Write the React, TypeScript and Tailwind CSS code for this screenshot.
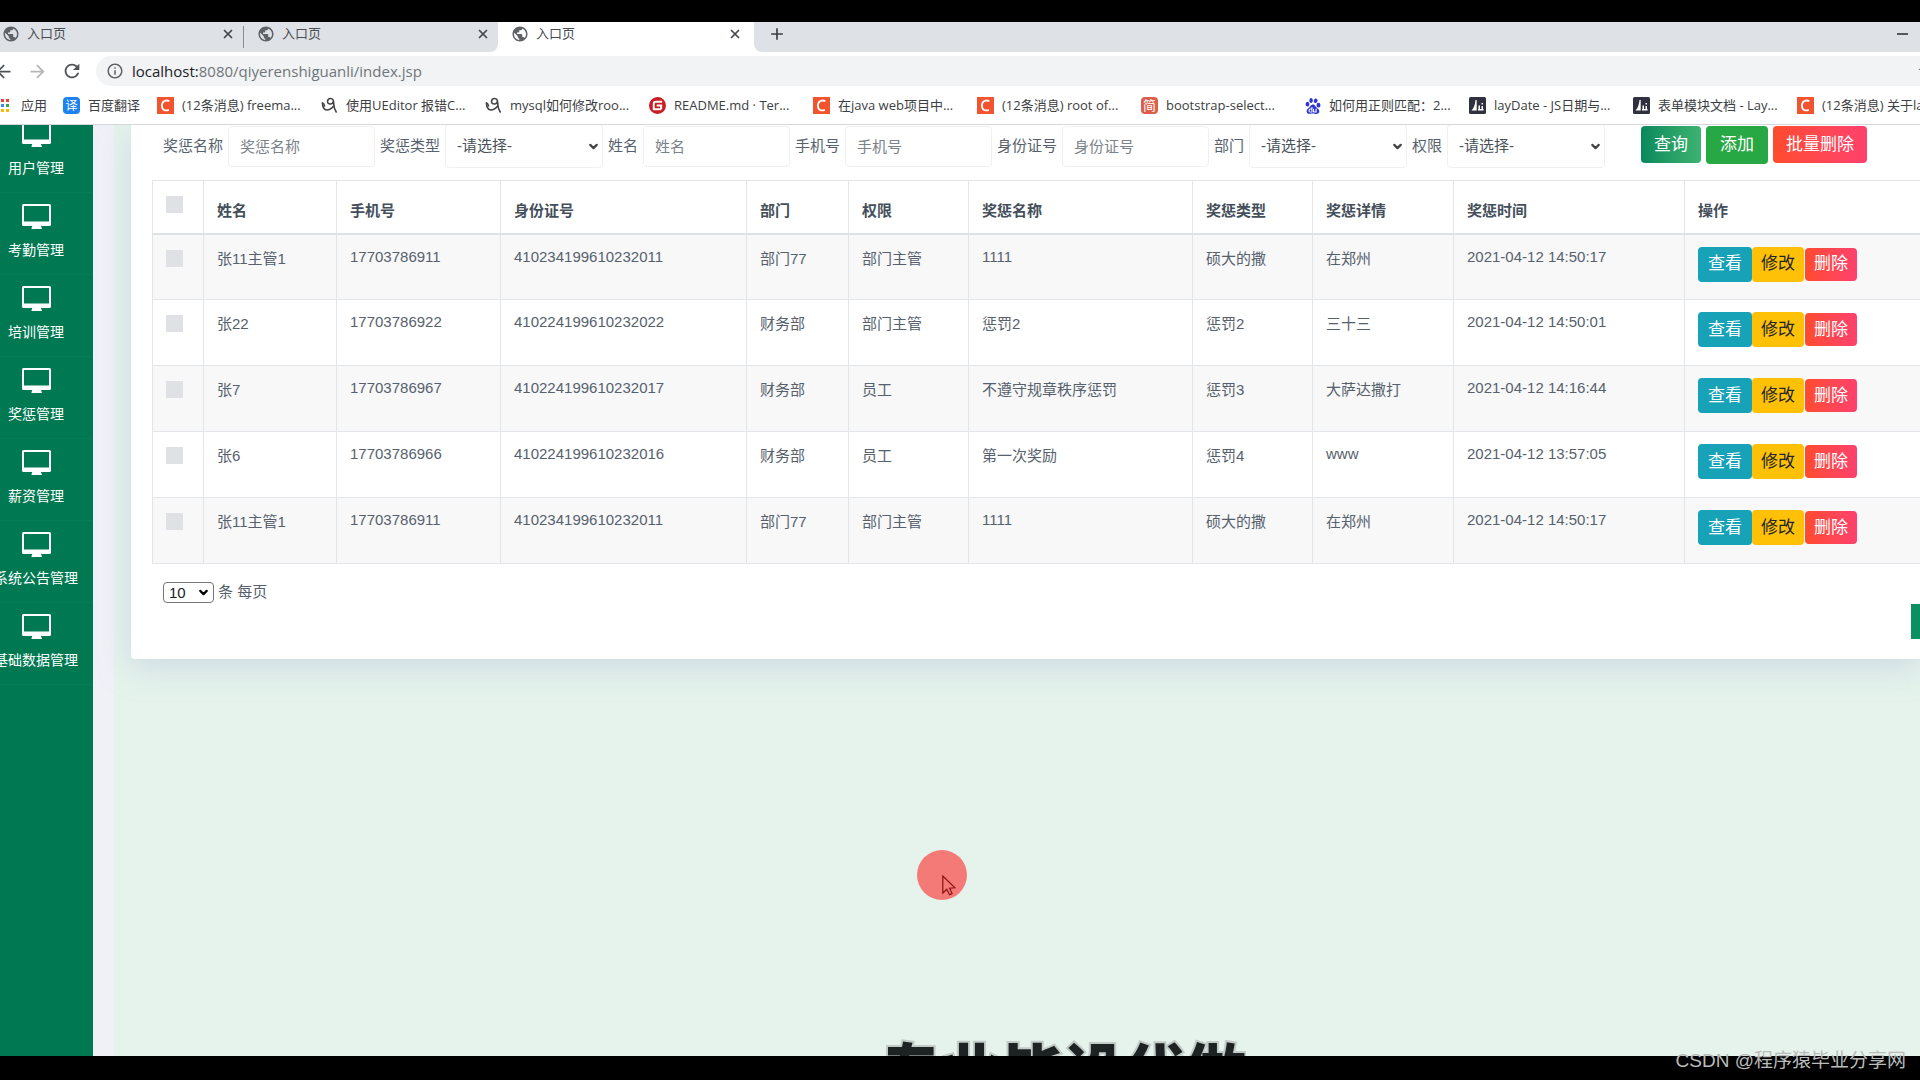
import { MdPublic, MdRefresh, MdArrowBack, MdArrowForward, MdInfoOutline, MdAdd, MdStar } from "react-icons/md";
import { SiBaidu, SiGitee } from "react-icons/si";
import { ChevronDown, X } from "lucide-react";
import type { ReactNode } from "react";

const uiFont = "font-['Open_Sans','Noto_Sans_CJK_SC',sans-serif]";
const pageFont = "font-['Liberation_Sans','Noto_Sans_CJK_SC',sans-serif]";

/* ---------- browser chrome ---------- */

function Tab({ active = false }: { active?: boolean }) {
  return (
    <div
      role="tab"
      aria-selected={active}
      className={
        active
          ? "flex h-full w-[256px] shrink-0 items-center bg-white pr-3 pb-[6px] pl-[13px]"
          : "flex h-full w-[254px] shrink-0 items-center bg-[#dee1e6] pr-2 pb-[6px] pl-[13px]"
      }
    >
      <MdPublic className="size-[18px] text-[#5f6368]" />
      <span className="ml-[7px] flex-1 text-[13px] text-[#4a4d51]">入口页</span>
      <button aria-label="关闭标签页" className="text-[#45494d]">
        <X className="size-[14px]" strokeWidth={3} />
      </button>
    </div>
  );
}

function TabStrip() {
  return (
    <div role="tablist" className="flex h-[30px] shrink-0 items-center bg-[#dee1e6]">
      <div className="-ml-[11px] flex h-full items-center">
        <Tab />
        <span className="h-[22px] w-px bg-[#888c91]" />
      </div>
      <div className="h-full bg-white">
        <div className="h-full overflow-hidden rounded-br-lg">
          <Tab />
        </div>
      </div>
      <Tab active />
      <div className="flex h-full flex-1 items-center justify-between bg-white">
        <div className="flex h-full flex-1 items-center justify-between rounded-bl-lg bg-[#dee1e6] pr-3 pb-[6px] pl-[13px]">
          <button aria-label="新标签页" className="text-[#3c4043]">
            <MdAdd className="size-[20px]" />
          </button>
          <button aria-label="最小化" className="h-[2px] w-[11px] bg-[#55585c]" />
        </div>
      </div>
    </div>
  );
}

function Toolbar() {
  return (
    <div className="flex h-[38px] shrink-0 items-center bg-white">
      <div className="-ml-[7px] flex items-center gap-[13px]">
        <button aria-label="后退" className="text-[#4f5357]"><MdArrowBack className="size-[21px]" /></button>
        <button aria-label="前进" className="text-[#b4b6b8]"><MdArrowForward className="size-[21px]" /></button>
        <button aria-label="刷新" className="text-[#4f5357]"><MdRefresh className="size-[22px]" /></button>
      </div>
      <div className="ml-[13px] flex h-[30px] flex-1 items-center overflow-hidden rounded-l-full bg-[#f1f3f4] pl-[10px]">
        <MdInfoOutline className="size-[18px] text-[#5f6368]" />
        <span className="ml-2 flex-1 text-[15px] text-[#70757a]">
          <span className="text-[#202124]">localhost:</span>8080/qiyerenshiguanli/index.jsp
        </span>
        <MdStar className="-mr-[15px] size-[18px] text-[#5f6368]" />
      </div>
    </div>
  );
}

function CsdnIcon() {
  return (
    <svg viewBox="0 0 17 17" className="size-[17px] shrink-0">
      <rect width="17" height="17" fill="#f4532f" />
      <path d="M12.400 4.200C9 2.600 5 3.800 4.900 8.600c0 4.800 3.600 5.600 7 4.200" fill="none" stroke="#fff" strokeWidth="1.800" />
    </svg>
  );
}

function BlogIcon() {
  return (
    <svg viewBox="0 0 17 17" className="size-[17px] shrink-0" fill="none" stroke="#444" strokeWidth="1.600" strokeLinecap="round">
      <path d="M1.500 6c0 4 1.300 6.500 4 7 2.500.3 5-1.500 7.200-4" />
      <path d="M12.500 6.500c.3-3.500-.8-5-2.800-5S6.500 3 6.500 4.600s1.300 2.500 2.800 2.400 3-1 3.200-3" />
      <path d="M12.500 5.500c.2 3.500.7 6.500 2.700 9.500" />
      <path d="M1.500 6c1 .3 1.800 1.500 2 3" />
    </svg>
  );
}

function LayuiIcon() {
  return (
    <svg viewBox="0 0 17 17" className="size-[17px] shrink-0" fill="#fff">
      <rect width="17" height="17" rx="1.500" fill="#2f3140" />
      <path d="M2.500 13.500c2.500-2.500 3.500-6 4-10.500h1.200v10.500z" />
      <path d="M9 12h5.500v1.500H9zM9.500 8.500H11V12H9.500zM12.500 6H14v1.500h-1.500zM12.500 9H14v3h-1.500z" />
    </svg>
  );
}

function AppsIcon() {
  const colors = ["#ea4335", "#ea4335", "#4285f4", "#34a853", "#fbbc04", "#fbbc04"];
  return (
    <svg viewBox="0 0 10 14" className="h-[14px] w-[10px]">
      {colors.map((c, i) => (
        <rect key={i} x={1 + (i % 2) * 5} y={Math.floor(i / 2) * 5} width="3" height="3" fill={c} />
      ))}
    </svg>
  );
}

const bookmarks: { icon: ReactNode; text: string }[] = [
  { icon: <CsdnIcon />, text: "(12条消息) freema..." },
  { icon: <BlogIcon />, text: "使用UEditor 报错C..." },
  { icon: <BlogIcon />, text: "mysql如何修改roo..." },
  { icon: <SiGitee className="size-[17px] text-[#c71d23]" />, text: "README.md · Ter..." },
  { icon: <CsdnIcon />, text: "在java web项目中..." },
  { icon: <CsdnIcon />, text: "(12条消息) root of..." },
  {
    icon: <span className="flex size-[17px] items-center justify-center rounded-sm bg-[#dc5f4d] text-[13px] leading-none text-white">简</span>,
    text: "bootstrap-select...",
  },
  { icon: <SiBaidu className="size-[16px] text-[#2c34d6]" />, text: "如何用正则匹配：2..." },
  { icon: <LayuiIcon />, text: "layDate - JS日期与..." },
  { icon: <LayuiIcon />, text: "表单模块文档 - Lay..." },
  { icon: <CsdnIcon />, text: "(12条消息) 关于la" },
];

function BookmarkBar() {
  return (
    <nav className="flex h-[35px] shrink-0 items-center overflow-hidden border-b border-[#d5d7da] bg-white pb-[3px] text-[13px] whitespace-nowrap text-[#3c4043]">
      <a href="#apps" className="flex w-[63px] shrink-0 items-center gap-[11px]"><AppsIcon />应用</a>
      <a href="#fanyi" className="flex w-[94px] shrink-0 items-center gap-2">
        <span className="flex size-[17px] items-center justify-center rounded-sm bg-[#1f83ee] text-[12px] leading-none text-white">译</span>
        百度翻译
      </a>
      {bookmarks.map((b, i) => (
        <a key={i} href="#bookmark" className="flex w-[164px] shrink-0 items-center gap-2">
          {b.icon}
          {b.text}
        </a>
      ))}
    </nav>
  );
}

/* ---------- page ---------- */

function MonitorIcon() {
  return (
    <svg viewBox="0 0 29 25" className="h-[25px] w-[29px]" fill="#fff">
      <path fillRule="evenodd" d="M1.500 0h26A1.500 1.500 0 0 1 29 1.500v19a1.500 1.500 0 0 1-1.500 1.500H19l.8 2.200V25H9.500v-.8L10.300 22h-8.800A1.500 1.500 0 0 1 0 20.500v-19A1.500 1.500 0 0 1 1.500 0zM2 2v15.500h25V2z" />
    </svg>
  );
}

const menu = ["用户管理", "考勤管理", "培训管理", "奖惩管理", "薪资管理", "系统公告管理", "基础数据管理"];

function Sidebar() {
  return (
    <aside className="w-[93px] shrink-0 overflow-hidden bg-[#007851]">
      <nav className="-mt-[14px] -ml-5 w-[112px]">
        {menu.map((m) => (
          <a key={m} href="#menu" className="flex h-[82px] flex-col items-center border-b border-[#067d57] pt-[11px] text-[14px] leading-5 text-white">
            <MonitorIcon />
            <span className="mt-[11px] whitespace-nowrap">{m}</span>
          </a>
        ))}
      </nav>
    </aside>
  );
}

function TextField({ id, label }: { id: string; label: string }) {
  return (
    <>
      <label htmlFor={id}>{label}</label>
      <input id={id} placeholder={label} className="h-[41px] w-[147px] rounded border border-[#eef0f3] bg-white px-[11px] placeholder:text-[#7b828a]" />
    </>
  );
}

function SelectField({ id, label }: { id: string; label: string }) {
  return (
    <>
      <label htmlFor={id}>{label}</label>
      <div className="relative">
        <select id={id} className="h-[44px] w-[158px] appearance-none rounded border border-[#eef0f3] bg-white px-[11px] text-[#495057]">
          <option>-请选择-</option>
        </select>
        <ChevronDown className="pointer-events-none absolute top-[16px] right-[3px] size-[13px] text-[#444]" strokeWidth={4} />
      </div>
    </>
  );
}

function Filters() {
  return (
    <form className="flex h-[42px] items-center gap-[5px] pl-[11px] whitespace-nowrap">
      <TextField id="name" label="奖惩名称" />
      <SelectField id="type" label="奖惩类型" />
      <TextField id="person" label="姓名" />
      <TextField id="phone" label="手机号" />
      <TextField id="idcard" label="身份证号" />
      <SelectField id="dept" label="部门" />
      <SelectField id="role" label="权限" />
      <div className="ml-[31px] flex items-center gap-[5px] pb-[3px] text-[17px] leading-6 text-white">
        <button type="button" className="h-[37px] rounded bg-linear-to-r from-[#06895c] to-[#3cb371] px-[13px]">查询</button>
        <button type="button" className="h-[38px] rounded bg-[#28a745] px-[14px]">添加</button>
        <button type="button" className="h-[37px] rounded bg-linear-to-r from-[#ff4b2b] to-[#ff416c] px-[13px]">批量删除</button>
      </div>
    </form>
  );
}

const columns = [
  { title: "姓名", width: "w-[133px]" },
  { title: "手机号", width: "w-[164px]" },
  { title: "身份证号", width: "w-[246px]" },
  { title: "部门", width: "w-[102px]" },
  { title: "权限", width: "w-[120px]" },
  { title: "奖惩名称", width: "w-[224px]" },
  { title: "奖惩类型", width: "w-[120px]" },
  { title: "奖惩详情", width: "w-[141px]" },
  { title: "奖惩时间", width: "w-[231px]" },
  { title: "操作", width: "" },
];

const rows = [
  ["张11主管1", "17703786911", "410234199610232011", "部门77", "部门主管", "1111", "硕大的撒", "在郑州", "2021-04-12 14:50:17"],
  ["张22", "17703786922", "410224199610232022", "财务部", "部门主管", "惩罚2", "惩罚2", "三十三", "2021-04-12 14:50:01"],
  ["张7", "17703786967", "410224199610232017", "财务部", "员工", "不遵守规章秩序惩罚", "惩罚3", "大萨达撒打", "2021-04-12 14:16:44"],
  ["张6", "17703786966", "410224199610232016", "财务部", "员工", "第一次奖励", "惩罚4", "www", "2021-04-12 13:57:05"],
  ["张11主管1", "17703786911", "410234199610232011", "部门77", "部门主管", "1111", "硕大的撒", "在郑州", "2021-04-12 14:50:17"],
];

const isLatin = (s: string) => /^[\x20-\x7e]+$/.test(s);

function Tick({ label }: { label: string }) {
  return <input type="checkbox" aria-label={label} className="block size-[17px] appearance-none bg-[#dfe1e4]" />;
}

function RewardTable() {
  return (
    <table className="mt-[13px] w-full table-fixed border-collapse border border-r-0 border-[#e2e5e9]">
      <thead>
        <tr className="h-[53px] border-b-2 border-[#dee2e6] text-left text-[#444f5b]">
          <th className="w-[51px] px-[13px] pt-[15px] align-top"><Tick label="全选" /></th>
          {columns.map((c) => (
            <th key={c.title} className={`${c.width} border-l border-[#e2e5e9] px-[13px] pt-2 align-middle leading-6 font-bold`}>{c.title}</th>
          ))}
        </tr>
      </thead>
      <tbody>
        {rows.map((row, i) => (
          <tr key={i} className="h-[66px] border-b border-[#e2e5e9] odd:bg-[#f8f8f9]">
            <td className="px-[13px] pt-[15px] align-top"><Tick label={`选择 ${row[0]}`} /></td>
            {row.map((cell, j) => (
              <td
                key={j}
                className={
                  isLatin(cell)
                    ? "border-l border-[#e2e5e9] px-[13px] pt-3 align-top leading-5 whitespace-nowrap"
                    : "border-l border-[#e2e5e9] px-[13px] pt-3 align-top leading-6 whitespace-nowrap"
                }
              >
                {cell}
              </td>
            ))}
            <td className="border-l border-[#e2e5e9] px-[13px] pt-3 align-top">
              <div className="flex items-center text-[17px] leading-6">
                <button className="h-[35px] rounded bg-[#17a2b8] px-[10px] text-white">查看</button>
                <button className="h-[35px] rounded bg-[#ffc107] px-[9px] text-[#212529]">修改</button>
                <button className="ml-px h-[33px] rounded-sm bg-linear-to-r from-[#ff4b2b] to-[#ff416c] px-[9px] text-white">删除</button>
              </div>
            </td>
          </tr>
        ))}
      </tbody>
    </table>
  );
}

function Pagination() {
  return (
    <div className="h-[95px] overflow-hidden pt-[17px] pl-[11px]">
      <div className="flex items-center gap-1">
        <div className="relative">
          <select id="size" className="block h-[21px] w-[51px] appearance-none rounded-sm border border-[#767676] bg-white pl-[5px] leading-none text-[#222]">
            <option>10</option>
          </select>
          <ChevronDown className="pointer-events-none absolute top-1 right-1 size-[13px] text-black" strokeWidth={4} />
        </div>
        <label htmlFor="size">条 每页</label>
      </div>
      <div className="flex justify-end">
        <button aria-label="第 1 页" className="h-[35px] w-[9px] bg-[#0a9061]" />
      </div>
    </div>
  );
}

export default function App() {
  return (
    <div className={`relative flex h-screen flex-col overflow-hidden bg-black pt-[22px] pb-6 ${uiFont}`}>
      <TabStrip />
      <Toolbar />
      <BookmarkBar />
      <div className={`flex min-h-0 flex-1 overflow-hidden bg-[#e5f3ec] text-[15px] text-[#56616d] ${pageFont}`}>
        <Sidebar />
        <div className="w-[21px] shrink-0 bg-[#f0f1f7]" />
        <main className="min-w-0 flex-1 pl-[17px]">
          <section className="rounded-bl bg-white pl-[21px] shadow-[0_8px_30px_rgba(190,200,220,0.6)]">
            <Filters />
            <RewardTable />
            <Pagination />
          </section>
        </main>
      </div>

      <div className="pointer-events-none absolute top-[850px] left-[917px] size-[50px] rounded-full bg-[#f47a78]">
        <svg viewBox="0 0 14 22" className="absolute top-[25px] left-[25px] h-[22px] w-[14px]" fill="none" stroke="#8c1010" strokeWidth="1.2">
          <path d="M.8 1v17l4-3.800 2.700 5.600 2.600-1.200-2.500-5.400 5.400-.4z" />
        </svg>
      </div>
      <div className="pointer-events-none absolute bottom-6 left-[880px] h-[24px] overflow-hidden">
        <p className="pt-2 text-[61px] leading-[64px] font-black whitespace-nowrap text-[#1d2322] [paint-order:stroke_fill] [-webkit-text-stroke:4px_#c3cbc8]">专业毕设代做</p>
      </div>
      <p className={`pointer-events-none absolute right-[14px] bottom-1 text-[19px] leading-[30px] text-[#b9bcbb] ${pageFont}`}>CSDN @程序猿毕业分享网</p>
    </div>
  );
}
